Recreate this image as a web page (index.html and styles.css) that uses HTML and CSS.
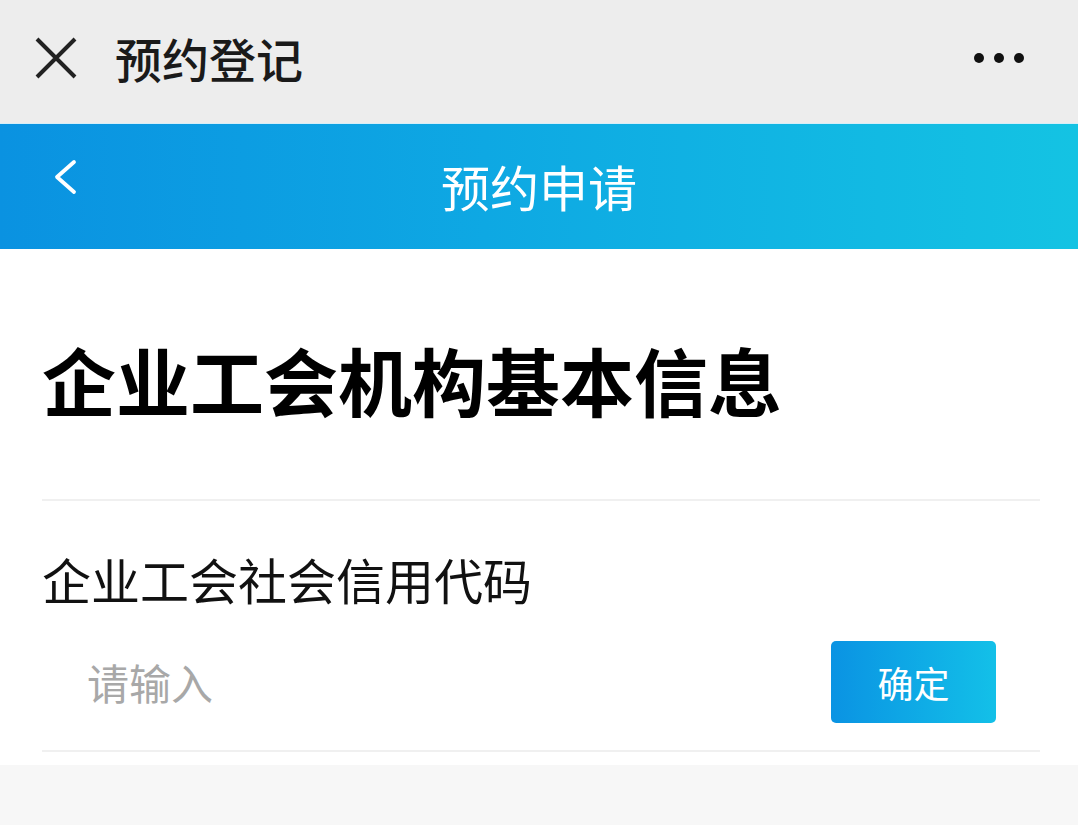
FILE: index.html
```html
<!DOCTYPE html>
<html lang="zh-CN">
<head>
<meta charset="utf-8">
<title>预约申请</title>
<link rel="stylesheet" href="styles.css">
</head>
<body>
<div class="topbar">
  <svg class="close-icon" width="42" height="42" viewBox="0 0 42 42">
    <path d="M2 2 L40 40 M40 2 L2 40" stroke="#222" stroke-width="4" stroke-linecap="butt" fill="none"/>
  </svg>
  <span class="topbar-title">预约登记</span>
  <div class="dots"><span></span><span></span><span></span></div>
</div>
<div class="header">
  <svg class="back-icon" width="26" height="36" viewBox="0 0 26 36">
    <path d="M22 3 L5 18 L22 33" stroke="#fff" stroke-width="3.8" stroke-linecap="round" stroke-linejoin="round" fill="none"/>
  </svg>
  <span class="header-title">预约申请</span>
</div>
<div class="content">
  <h1 class="section-title">企业工会机构基本信息</h1>
  <div class="divider"></div>
  <div class="field-label">企业工会社会信用代码</div>
  <div class="input-row">
    <span class="placeholder">请输入</span>
    <button class="confirm-btn">确定</button>
  </div>
  <div class="divider"></div>
</div>
</body>
</html>
```

FILE: styles.css
```css
html, body {
  margin: 0;
  padding: 0;
}
body {
  background: #f7f7f7;
  font-family: "Noto Sans CJK SC", "Noto Sans", sans-serif;
}
.topbar {
  height: 124px;
  background: #ededed;
  display: flex;
  align-items: center;
  padding: 0 0 0 35px;
  box-sizing: border-box;
  border-bottom: 1px solid #d6eef8;
}
.close-icon {
  display: block;
  margin-top: -8px;
}
.topbar-title {
  margin-left: 38px;
  font-size: 47px;
  font-weight: 500;
  color: #1a1a1a;
  line-height: 1;
  margin-top: -8px;
}
.dots {
  margin-left: auto;
  margin-right: 54px;
  display: flex;
  gap: 10px;
  margin-top: -8px;
}
.dots span {
  width: 10px;
  height: 10px;
  border-radius: 50%;
  background: #111;
  display: block;
}
.header {
  height: 125px;
  background: linear-gradient(90deg, #0a92e1 0%, #0ea8e3 45%, #14c3e3 100%);
  position: relative;
  display: flex;
  align-items: center;
  justify-content: center;
}
.back-icon {
  position: absolute;
  left: 52px;
  top: 35px;
}
.header-title {
  color: #fff;
  font-size: 49px;
  font-weight: 400;
  line-height: 1;
  margin-top: -2px;
}
.content {
  background: #fff;
  padding: 80px 38px 13px 42px;
}
.section-title {
  margin: 0;
  font-size: 74px;
  font-weight: 700;
  line-height: 100px;
  color: #000;
  height: 100px;
}
.divider {
  height: 2px;
  background: #f0f0f0;
}
.section-title + .divider {
  margin-top: 70px;
}
.field-label {
  margin-top: 48px;
  font-size: 49px;
  line-height: 60px;
  color: #111;
}
.input-row {
  margin-top: 32px;
  display: flex;
  align-items: center;
  justify-content: space-between;
  padding: 0 44px 0 45px;
  margin-bottom: 27px;
}
.placeholder {
  font-size: 42px;
  color: #a8a8a8;
  line-height: 1;
}
.confirm-btn {
  width: 165px;
  height: 82px;
  border: none;
  border-radius: 5px;
  background: linear-gradient(90deg, #0a93e3 0%, #13c0e8 100%);
  color: #fff;
  font-family: "Noto Sans CJK SC", sans-serif;
  font-size: 36px;
  padding: 0;
  line-height: 1;
}
```
